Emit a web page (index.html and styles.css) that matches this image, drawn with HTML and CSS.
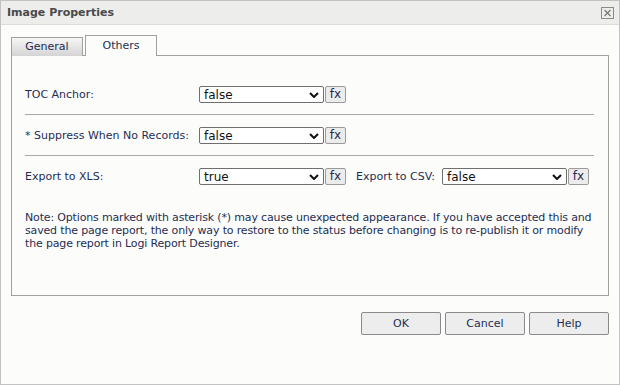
FILE: index.html
```html
<!DOCTYPE html>
<html>
<head>
<meta charset="utf-8">
<link rel="stylesheet" href="styles.css">
</head>
<body>
<div class="dialog">
  <div class="titlebar">
    <span class="title">Image Properties</span>
    <svg class="close" width="13" height="12" viewBox="0 0 13 12"><rect x="0.5" y="0.5" width="12" height="11" fill="none" stroke="#8a8a8a"/><path d="M3.5 3 L9.5 9 M9.5 3 L3.5 9" stroke="#777" stroke-width="1.2"/></svg>
  </div>
  <div class="content">
    <div class="tabs">
      <div class="tab">General</div>
      <div class="tab active">Others</div>
    </div>
    <div class="panel">
      <div class="row sep">
        <span class="label">TOC Anchor:</span>
        <div class="select"><span>false</span><svg width="10" height="6" viewBox="0 0 10 6"><path d="M1 1 L5 5 L9 1" fill="none" stroke="#111" stroke-width="2"/></svg></div>
        <button class="fx">fx</button>
      </div>
      <div class="row sep">
        <span class="label">* Suppress When No Records:</span>
        <div class="select"><span>false</span><svg width="10" height="6" viewBox="0 0 10 6"><path d="M1 1 L5 5 L9 1" fill="none" stroke="#111" stroke-width="2"/></svg></div>
        <button class="fx">fx</button>
      </div>
      <div class="row">
        <span class="label">Export to XLS:</span>
        <div class="select"><span>true</span><svg width="10" height="6" viewBox="0 0 10 6"><path d="M1 1 L5 5 L9 1" fill="none" stroke="#111" stroke-width="2"/></svg></div>
        <button class="fx">fx</button>
        <span class="label2">Export to CSV:</span>
        <div class="select"><span>false</span><svg width="10" height="6" viewBox="0 0 10 6"><path d="M1 1 L5 5 L9 1" fill="none" stroke="#111" stroke-width="2"/></svg></div>
        <button class="fx">fx</button>
      </div>
      <p class="note">Note: Options marked with asterisk (*) may cause unexpected appearance. If you have accepted this and saved the page report, the only way to restore to the status before changing is to re-publish it or modify the page report in Logi Report Designer.</p>
    </div>
    <div class="buttons">
      <button class="btn">OK</button>
      <button class="btn">Cancel</button>
      <button class="btn">Help</button>
    </div>
  </div>
</div>
</body>
</html>
```

FILE: styles.css
```css
html, body {
  margin: 0;
  padding: 0;
}
body {
  width: 620px;
  height: 385px;
  overflow: hidden;
  font-family: "DejaVu Sans", Verdana, sans-serif;
  font-size: 11px;
  color: #1f2d52;
}
.dialog {
  box-sizing: border-box;
  width: 620px;
  height: 385px;
  border: 1px solid #c2c2c2;
  background: #fcfdfb;
  display: flex;
  flex-direction: column;
}
.titlebar {
  height: 23px;
  background: #ededeb;
  border-bottom: 1px solid #dcdcda;
  display: flex;
  align-items: center;
  justify-content: space-between;
  padding: 0 5px 0 6px;
}
.title {
  font-weight: bold;
  font-size: 11px;
  color: #4a4a4a;
}
.close {
  display: block;
}
.content {
  padding: 10px 10px 0 10px;
}
.tabs {
  display: flex;
  gap: 2px;
  align-items: flex-end;
  height: 21px;
  margin-bottom: -1px;
  position: relative;
}
.tab {
  box-sizing: border-box;
  width: 72px;
  height: 19px;
  border: 1px solid #a0a0a0;
  border-bottom: none;
  background: linear-gradient(#f6f6f6, #d4d4d4);
  display: flex;
  align-items: center;
  justify-content: center;
  padding-bottom: 1px;
  color: #1f2d52;
}
.tab.active {
  height: 21px;
  background: #fcfdfb;
  padding-bottom: 1px;
}
.panel {
  box-sizing: border-box;
  height: 241px;
  border: 1px solid #a0a0a0;
  padding: 19px 14px 0 13px;
}
.row {
  display: flex;
  align-items: center;
  height: 17px;
  padding: 12px 0 11px;
}
.row:first-child {
  padding-top: 11px;
}
.row.sep {
  border-bottom: 1px solid #a8a8a8;
}
.label {
  width: 174px;
  flex: none;
}
.label2 {
  margin-left: 10px;
  width: 86px;
  flex: none;
}
.select {
  box-sizing: border-box;
  width: 125px;
  height: 17px;
  border: 1px solid #6f6f6f;
  border-radius: 2px;
  background: #fff;
  display: flex;
  align-items: center;
  justify-content: space-between;
  padding: 0 4px 0 4px;
  color: #111;
  font-size: 12px;
}
.select svg {
  display: block;
}
.fx {
  box-sizing: border-box;
  margin: -1px 0 0 1px;
  width: 21px;
  height: 17px;
  padding: 0 0 1px;
  border: 1px solid #9a9a9a;
  border-radius: 2px;
  background: #ececec;
  font-family: "DejaVu Sans", Verdana, sans-serif;
  font-size: 12px;
  color: #1f2d52;
  display: flex;
  align-items: center;
  justify-content: center;
}
.note {
  margin: 15px 0 0;
  line-height: 13px;
  letter-spacing: -0.16px;
  color: #1f2d52;
}
.buttons {
  display: flex;
  justify-content: flex-end;
  gap: 4px;
  margin-top: 16px;
}
.btn {
  box-sizing: border-box;
  width: 80px;
  height: 23px;
  border: 1px solid #8a8a8a;
  border-radius: 2px;
  background: #ededed;
  font-family: "DejaVu Sans", Verdana, sans-serif;
  font-size: 11px;
  color: #1f2d52;
}
```
